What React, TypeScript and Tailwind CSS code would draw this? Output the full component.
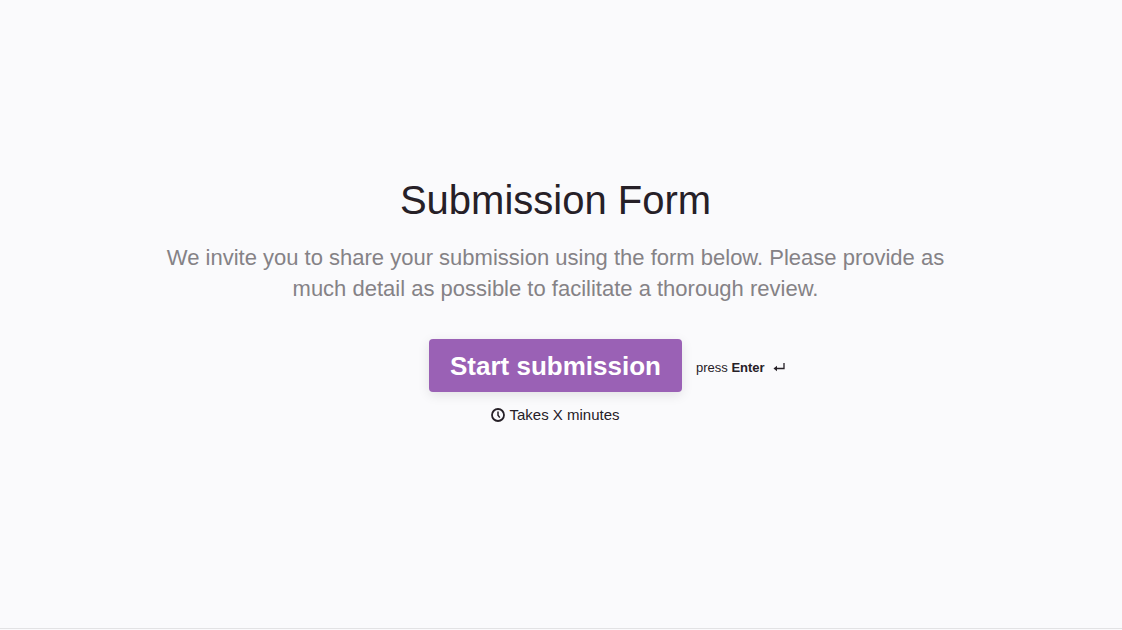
function ClockIcon() {
  return (
    <svg
      viewBox="0 0 14 14"
      className="h-3.5 w-3.5 shrink-0"
      fill="none"
      stroke="currentColor"
      aria-hidden="true"
    >
      <circle cx="7" cy="7" r="6" strokeWidth="1.8" />
      <path d="M7 3.6V7.2l1.8 2.4" strokeWidth="1.5" />
    </svg>
  );
}

function EnterIcon() {
  return (
    <svg
      viewBox="0 0 12 10"
      className="h-2.5 w-3 shrink-0"
      fill="none"
      aria-hidden="true"
    >
      <path d="M11 0V5.5H3" stroke="currentColor" strokeWidth="1.3" />
      <path d="M0.5 5.5L4 2.8v5.4z" fill="currentColor" />
    </svg>
  );
}

export default function App() {
  return (
    <div className="flex min-h-screen flex-col bg-[#fafafc] font-['Liberation_Sans',Arial,sans-serif] text-[#262027]">
      <main className="flex flex-1 flex-col items-center justify-center pr-3 pb-7 pl-px text-center">
        <h1 className="text-[40px] leading-[52px]">Submission Form</h1>
        <p className="mt-4 max-w-[800px] text-[22px] leading-[31px] text-[#858286]">
          We invite you to share your submission using the form below. Please
          provide as much detail as possible to facilitate a thorough review.
        </p>

        <div className="mt-[35px] grid w-full grid-cols-[1fr_auto_1fr] items-center gap-x-3.5">
          <button
            type="button"
            className="col-start-2 h-[53px] cursor-pointer rounded bg-[#9a61b5] px-[21px] pt-0.5 text-[26px] font-bold text-white shadow-[0_3px_12px_rgba(0,0,0,0.1)]"
          >
            Start submission
          </button>
          <div className="flex items-center gap-2 pt-1 text-[13px]">
            <span>
              press <strong>Enter</strong>
            </span>
            <EnterIcon />
          </div>
        </div>

        <div className="mt-3 flex items-center gap-1 text-[15px] leading-[22px]">
          <ClockIcon />
          <span>Takes X minutes</span>
        </div>
      </main>
      <footer className="h-0.5 border-t border-[#e2e2e4]" />
    </div>
  );
}
